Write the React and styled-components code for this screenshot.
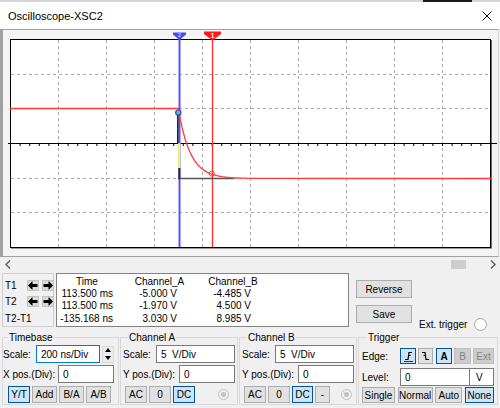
import React from 'react';
import styled, { createGlobalStyle, css } from 'styled-components';

const GlobalStyle = createGlobalStyle`
  html, body { margin: 0; padding: 0; background: #f0f0f0; }
  body { font-family: "Liberation Sans", Arial, sans-serif; }
  * { box-sizing: border-box; }
`;

const timeRows = [
    ['113.500 ms', '-5.000 V', '-4.485 V'],
    ['113.500 ms', '-1.970 V', '4.500 V'],
    ['-135.168 ns', '3.030 V', '8.985 V'],
];

const headers = [
    { text: 'Time', pr: 3 },
    { text: 'Channel_A', pr: 0 },
    { text: 'Channel_B', pr: 8 },
];
const valuePad = [7, 22, 24];

// red trace of channel A: flat, then an RC style decay
const redTrace = (() => {
    const pts = [[10, 108.5], [178.5, 108.5], [178.5, 112.5]];
    for (let x = 179; x <= 246; x += 1) {
        pts.push([x, 178.5 - 66 * Math.exp(-(x - 179) / 12)]);
    }
    pts.push([491, 178.5]);
    return pts.map(p => p[0].toFixed(1) + ',' + p[1].toFixed(1)).join(' ');
})();

const vGrid = [1, 2, 3, 4, 5, 6, 7, 8, 9].map(i => 10.5 + 48 * i);
const hGrid = [1, 2, 4, 5].map(j => Math.round(39 + (208 / 6) * j) + 0.5);
const ticks = [];
for (let x = 10; x <= 491; x += 9.6) ticks.push(x);

const Plot = () => (
    <svg width="495" height="226" viewBox="3 30 495 226" style={{ display: 'block' }}>
        <rect x="10.5" y="39.5" width="480" height="208" fill="#fff" stroke="#000" />
        <line x1="491.5" y1="40" x2="491.5" y2="248.5" stroke="#6a6a6a" />
        <line x1="11" y1="248.5" x2="492" y2="248.5" stroke="#9a9a9a" />
        {vGrid.map(x => (
            <line key={x} x1={x} y1="40" x2={x} y2="247" stroke="#a8a8a8" strokeDasharray="3 3" />
        ))}
        {hGrid.map(y => (
            <line key={y} x1="11" y1={y} x2="490" y2={y} stroke="#a8a8a8" strokeDasharray="3 3" />
        ))}
        <line x1="8" y1="143.5" x2="497" y2="143.5" stroke="#000" />
        {ticks.map(x => (
            <line key={x} x1={x + 0.5} y1="143.5" x2={x + 0.5} y2="146" stroke="#000" />
        ))}

        <line x1="179.5" y1="38" x2="179.5" y2="247" stroke="#5252ff" strokeWidth="2" />
        <line x1="212.5" y1="38" x2="212.5" y2="247" stroke="#ff2a2a" strokeWidth="1.3" />

        <line x1="178" y1="113" x2="232" y2="178.5" stroke="none" />
        <line x1="178" y1="178.5" x2="234" y2="178.5" stroke="#555" strokeWidth="1.6" />
        <line x1="177.8" y1="113" x2="177.8" y2="143" stroke="#1c1c48" strokeWidth="1.6" />
        <line x1="179.3" y1="143" x2="179.3" y2="168" stroke="#ffff3c" strokeWidth="2" />
        <line x1="179.3" y1="168" x2="179.3" y2="178.5" stroke="#2a2a2a" strokeWidth="2" />

        <polyline points={redTrace} fill="none" stroke="#ff3a3a" strokeWidth="1.3" />

        <circle cx="178.3" cy="112.6" r="2.6" fill="#5fd05f" stroke="#3a3aff" strokeWidth="1.2" />
        <circle cx="211.8" cy="173.6" r="2.6" fill="none" stroke="#ff3a3a" strokeWidth="1" />

        <polygon points="173,32.5 186,32.5 186,34.5 179.5,40 173,34.5" fill="#4a4aff" />
        <text x="179.5" y="37.3" fontSize="5" fill="#fff" textAnchor="middle" fontFamily="Liberation Sans">2</text>
        <polygon points="204,31.5 221,31.5 221,34 212.5,40.5 204,34" fill="#ff1a1a" />
        <text x="212.5" y="37.5" fontSize="6.5" fill="#fff" fontWeight="bold" textAnchor="middle" fontFamily="Liberation Sans">1</text>
    </svg>
);

const Chevron = ({ right }) => (
    <svg width="6" height="9" viewBox="0 0 6 9">
        <polyline points={right ? '1,0.5 5,4.5 1,8.5' : '5,0.5 1,4.5 5,8.5'} fill="none" stroke="#606060" strokeWidth="1.5" />
    </svg>
);

const Arrow = ({ right }) => (
    <svg width="10" height="9" viewBox="0 0 10 9">
        <polygon
            points={right ? '10,4.5 5.5,0 5.5,3 0.5,3 0.5,6 5.5,6 5.5,9' : '0,4.5 4.5,0 4.5,3 9.5,3 9.5,6 4.5,6 4.5,9'}
            fill="#000"
        />
    </svg>
);

const EdgeIcon = ({ falling }) => (
    <svg width="11" height="12" viewBox="0 0 11 12">
        {falling ? (
            <path d="M2 2.5 H5 L6 9.5 H9 M3.5 5.5 L5.4 5.5" fill="none" stroke="#000" strokeWidth="1.2" />
        ) : (
            <>
                <path d="M2 9.5 H5 L6 2.5 H9 M5.6 5.5 L7.5 5.5" fill="none" stroke="#000" strokeWidth="1.2" />
                <line x1="1" y1="11.5" x2="10" y2="11.5" stroke="#000" strokeWidth="0.8" />
            </>
        )}
    </svg>
);

const App = () => {
    return (
        <Window>
            <GlobalStyle />
            <TopStrip><StripMark /></TopStrip>
            <TitleBar>
                <Title>Oscilloscope-XSC2</Title>
                <svg width="10" height="10" viewBox="0 0 10 10">
                    <path d="M0.5 0.5 L9.5 9.5 M9.5 0.5 L0.5 9.5" stroke="#111" strokeWidth="1" />
                </svg>
            </TitleBar>
            <ScopeFrame>
                <Plot />
            </ScopeFrame>
            <ScrollBar>
                <Chevron />
                <Track><Thumb /></Track>
                <Chevron right />
            </ScrollBar>

            <MidRow>
                <CursorBox>
                    <CursorLabel>T1</CursorLabel>
                    <ArrowBtn><Arrow /></ArrowBtn>
                    <ArrowBtn><Arrow right /></ArrowBtn>
                    <CursorLabel>T2</CursorLabel>
                    <ArrowBtn><Arrow /></ArrowBtn>
                    <ArrowBtn><Arrow right /></ArrowBtn>
                    <CursorLabel $span>T2-T1</CursorLabel>
                </CursorBox>
                <DataBox>
                    {headers.map(h => (
                        <Cell key={h.text} $align="center" $pr={h.pr}>{h.text}</Cell>
                    ))}
                    {timeRows.map((row, r) =>
                        row.map((v, c) => (
                            <Cell key={r + '-' + c} $align="right" $pr={valuePad[c]}>{v}</Cell>
                        ))
                    )}
                </DataBox>
                <ButtonCol>
                    <PlainButton>Reverse</PlainButton>
                    <PlainButton>Save</PlainButton>
                </ButtonCol>
                <ExtTrigger>
                    <span>Ext. trigger</span>
                    <Radio $size={13} />
                </ExtTrigger>
            </MidRow>

            <GroupRow>
                <Group $w={117} $pl={0} $pr={4}>
                    <Legend>Timebase</Legend>
                    <Row>
                        <span>Scale:</span>
                        <Controls>
                            <Field $w={64} $focus readOnly value="200 ns/Div" />
                            <Spinner>
                                <svg width="6" height="4" viewBox="0 0 6 4"><polygon points="3,0 6,4 0,4" fill="#000" /></svg>
                                <svg width="6" height="4" viewBox="0 0 6 4"><polygon points="0,0 6,0 3,4" fill="#000" /></svg>
                            </Spinner>
                        </Controls>
                    </Row>
                    <Row $mt={2}>
                        <span>X pos.(Div):</span>
                        <Field $w={56} readOnly value="0" />
                    </Row>
                    <BtnRow $pl={5} $gap={2}>
                        <Btn $w={22} $v="active">Y/T</Btn>
                        <Btn $w={25}>Add</Btn>
                        <Btn $w={25}>B/A</Btn>
                        <Btn $w={25}>A/B</Btn>
                    </BtnRow>
                </Group>

                <Group $w={118} $pl={2} $pr={2}>
                    <Legend>Channel A</Legend>
                    <Row>
                        <span>Scale:</span>
                        <Field $w={79} readOnly value="5  V/Div" />
                    </Row>
                    <Row $mt={2}>
                        <span>Y pos.(Div):</span>
                        <Field $w={56} readOnly value="0" />
                    </Row>
                    <BtnRow $pl={2} $gap={2}>
                        <Btn $w={22}>AC</Btn>
                        <Btn $w={22}>0</Btn>
                        <Btn $w={22} $v="active">DC</Btn>
                        <Radio $size={11} $dot $disabled $push={6} />
                    </BtnRow>
                </Group>

                <Group $w={118} $pl={2} $pr={2}>
                    <Legend>Channel B</Legend>
                    <Row>
                        <span>Scale:</span>
                        <Field $w={79} readOnly value="5  V/Div" />
                    </Row>
                    <Row $mt={2}>
                        <span>Y pos.(Div):</span>
                        <Field $w={56} readOnly value="0" />
                    </Row>
                    <BtnRow $pl={2} $gap={2}>
                        <Btn $w={22}>AC</Btn>
                        <Btn $w={22}>0</Btn>
                        <Btn $w={21} $v="active">DC</Btn>
                        <Btn $w={15}>-</Btn>
                        <Radio $size={11} $dot $disabled $push={2} />
                    </BtnRow>
                </Group>

                <Group $w={140} $pl={3} $pr={3}>
                    <Legend>Trigger</Legend>
                    <Row $mt={3} $h={16}>
                        <span>Edge:</span>
                        <Controls $gap={2}>
                            <Btn $w={16} $h={16} $v="active"><EdgeIcon /></Btn>
                            <Btn $w={15} $h={16}><EdgeIcon falling /></Btn>
                            <Btn $w={16} $h={16} $v="active" $bold $ml={1}>A</Btn>
                            <Btn $w={17} $h={16} $v="disabled">B</Btn>
                            <Btn $w={21} $h={16} $v="disabled">Ext</Btn>
                        </Controls>
                    </Row>
                    <Row $mt={4}>
                        <span>Level:</span>
                        <Controls>
                            <Field $w={70} readOnly value="0" />
                            <Unit>V</Unit>
                        </Controls>
                    </Row>
                    <BtnRow $mt={1} $between>
                        <Btn $w={33} $h={16}>Single</Btn>
                        <Btn $w={35} $h={16}>Normal</Btn>
                        <Btn $w={27} $h={16}>Auto</Btn>
                        <Btn $w={29} $h={16} $v="active">None</Btn>
                    </BtnRow>
                </Group>
            </GroupRow>
        </Window>
    );
};
export default App;

const Window = styled.div`
    width: 500px;
    height: 408px;
    background: #f0f0f0;
    overflow: hidden;
    display: flex;
    flex-direction: column;
    font-size: 10px;
    color: #000;
`;
const TopStrip = styled.div`
    height: 2px;
    flex: none;
    background: #d4d4d4;
    display: flex;
`;
const StripMark = styled.div`
    margin-left: 423px;
    width: 49px;
    background: #1a1a1a;
`;
const TitleBar = styled.div`
    height: 27px;
    flex: none;
    background: #fff;
    display: flex;
    align-items: center;
    justify-content: space-between;
    padding: 0 8px 0 8px;
`;
const Title = styled.div`
    font-size: 11px;
    color: #000;
`;
const ScopeFrame = styled.div`
    height: 228px;
    flex: none;
    width: 499px;
    background: #f4f4f4;
    border-top: 1px solid #a0a0a0;
    border-left: 3px solid #a0a0a0;
    border-right: 1px solid #d6d6d6;
    border-bottom: 1px solid #a0a0a0;
`;
const ScrollBar = styled.div`
    height: 14px;
    flex: none;
    display: flex;
    align-items: center;
    padding: 0 4px 0 5px;
`;
const Track = styled.div`
    flex: 1;
    height: 9px;
    display: flex;
    justify-content: flex-end;
    padding-right: 24px;
`;
const Thumb = styled.div`
    width: 15px;
    height: 9px;
    background: #cdcdcd;
`;
const MidRow = styled.div`
    display: flex;
    align-items: flex-start;
    height: 54px;
    margin-top: 2px;
    flex: none;
`;
const CursorBox = styled.div`
    margin-left: 2px;
    width: 52px;
    height: 54px;
    border: 1px solid #cfcfcf;
    display: grid;
    grid-template-columns: 19px 12px 12px;
    grid-template-rows: 11px 11px 12px;
    column-gap: 3px;
    row-gap: 5px;
    padding: 6px 0 0 2px;
`;
const CursorLabel = styled.div`
    display: flex;
    align-items: center;
    font-size: 10px;
    ${p => p.$span && css`
        grid-column: 1 / span 3;
    `}
`;
const ArrowBtn = styled.div`
    background: #dadada;
    border: 1px solid #c4c4c4;
    display: flex;
    align-items: center;
    justify-content: center;
`;
const DataBox = styled.div`
    margin-left: 2px;
    width: 293px;
    height: 54px;
    background: #fff;
    border: 1px solid #828282;
    display: grid;
    grid-template-columns: 63px 79px 76px;
    grid-auto-rows: 12.2px;
    padding-top: 2px;
`;
const Cell = styled.div`
    text-align: ${p => p.$align};
    padding-right: ${p => p.$pr}px;
    line-height: 12.2px;
    white-space: nowrap;
`;
const ButtonCol = styled.div`
    margin-left: 7px;
    padding-top: 7px;
    display: flex;
    flex-direction: column;
    gap: 7px;
`;
const PlainButton = styled.button`
    width: 56px;
    height: 18px;
    padding: 0;
    font: inherit;
    font-size: 10px;
    color: #000;
    background: #e1e1e1;
    border: 1px solid #adadad;
`;
const ExtTrigger = styled.div`
    margin-left: 7px;
    margin-top: 44px;
    height: 14px;
    display: flex;
    align-items: center;
    gap: 7px;
`;
const Radio = styled.div`
    width: ${p => p.$size}px;
    height: ${p => p.$size}px;
    border-radius: 50%;
    flex: none;
    background: ${p => (p.$disabled ? '#f0f0f0' : '#fff')};
    border: 1px solid ${p => (p.$disabled ? '#c2c2c2' : '#a6a6a6')};
    display: flex;
    align-items: center;
    justify-content: center;
    ${p => p.$push !== undefined && css`
        margin-left: auto;
        margin-right: ${p.$push}px;
    `}
    ${p => p.$dot && css`
        &::after {
            content: '';
            width: 5px;
            height: 5px;
            border-radius: 50%;
            background: #c2c2c2;
        }
    `}
`;
const GroupRow = styled.div`
    display: flex;
    gap: 1px;
    padding-left: 2px;
    margin-top: 4px;
    flex: none;
`;
const Group = styled.fieldset`
    margin: 0;
    min-width: 0;
    width: ${p => p.$w}px;
    height: 74px;
    padding: 1px ${p => p.$pr}px 1px ${p => p.$pl}px;
    border: 1px solid #d9d9d9;
    display: flex;
    flex-direction: column;
`;
const Legend = styled.legend`
    font-size: 10px;
    line-height: 13px;
    padding: 0 1px;
    margin-left: 5px;
`;
const Row = styled.div`
    display: flex;
    align-items: center;
    justify-content: space-between;
    height: ${p => p.$h || 18}px;
    margin-top: ${p => p.$mt || 0}px;
    white-space: nowrap;
`;
const Controls = styled.div`
    display: flex;
    align-items: center;
    gap: ${p => p.$gap || 0}px;
`;
const Field = styled.input`
    width: ${p => p.$w}px;
    height: 18px;
    margin: 0;
    padding: 0 0 0 4px;
    font: inherit;
    font-size: 10px;
    color: #000;
    background: #fff;
    border: 1px solid ${p => (p.$focus ? '#0078d7' : '#7a7a7a')};
    outline: none;
    white-space: pre;
`;
const Spinner = styled.div`
    width: 12px;
    height: 17px;
    margin-left: 2px;
    background: #ececec;
    border: 1px solid #d8d8d8;
    display: flex;
    flex-direction: column;
    align-items: center;
    justify-content: space-around;
`;
const Unit = styled.div`
    width: 25px;
    height: 18px;
    margin-left: -1px;
    background: #fff;
    border: 1px solid #7a7a7a;
    display: flex;
    align-items: center;
    padding-left: 6px;
`;
const BtnRow = styled.div`
    display: flex;
    align-items: center;
    gap: ${p => p.$gap || 0}px;
    justify-content: ${p => (p.$between ? 'space-between' : 'flex-start')};
    padding-left: ${p => p.$pl || 0}px;
    margin-top: ${p => (p.$mt !== undefined ? p.$mt : 3)}px;
    height: ${p => (p.$between ? 16 : 17)}px;
`;
const variants = {
    normal: css`
        background: #e1e1e1;
        border: 1px solid #adadad;
        color: #000;
    `,
    active: css`
        background: #cce4f7;
        border: 1px solid #005499;
        color: #000;
    `,
    disabled: css`
        background: #cccccc;
        border: 1px solid #bfbfbf;
        color: #838383;
    `,
};
const Btn = styled.button`
    width: ${p => p.$w}px;
    height: ${p => p.$h || 17}px;
    margin: 0 0 0 ${p => p.$ml || 0}px;
    padding: 0;
    flex: none;
    font: inherit;
    font-size: 10px;
    font-weight: ${p => (p.$bold ? 'bold' : 'normal')};
    display: flex;
    align-items: center;
    justify-content: center;
    ${p => variants[p.$v || 'normal']}
`;
